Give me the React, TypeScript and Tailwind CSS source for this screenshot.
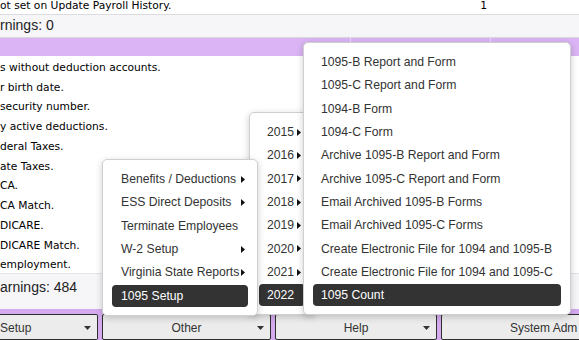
import React from "react";

const rows = [
  "s without deduction accounts.",
  "r birth date.",
  "security number.",
  "y active deductions.",
  "deral Taxes.",
  "ate Taxes.",
  "CA.",
  "CA Match.",
  "DICARE.",
  "DICARE Match.",
  "employment.",
];

type Item = { label: string; sub?: boolean; active?: boolean };

const otherItems: Item[] = [
  { label: "Benefits / Deductions", sub: true },
  { label: "ESS Direct Deposits", sub: true },
  { label: "Terminate Employees" },
  { label: "W-2 Setup", sub: true },
  { label: "Virginia State Reports", sub: true },
  { label: "1095 Setup", active: true },
];

const yearItems: Item[] = [
  { label: "2015", sub: true },
  { label: "2016", sub: true },
  { label: "2017", sub: true },
  { label: "2018", sub: true },
  { label: "2019", sub: true },
  { label: "2020", sub: true },
  { label: "2021", sub: true },
  { label: "2022", active: true },
];

const formItems: Item[] = [
  { label: "1095-B Report and Form" },
  { label: "1095-C Report and Form" },
  { label: "1094-B Form" },
  { label: "1094-C Form" },
  { label: "Archive 1095-B Report and Form" },
  { label: "Archive 1095-C Report and Form" },
  { label: "Email Archived 1095-B Forms" },
  { label: "Email Archived 1095-C Forms" },
  { label: "Create Electronic File for 1094 and 1095-B" },
  { label: "Create Electronic File for 1094 and 1095-C" },
  { label: "1095 Count", active: true },
];

function SubArrow() {
  return (
    <svg width="4" height="7" viewBox="0 0 4 7" className="shrink-0">
      <polygon points="0,0 4,3.5 0,7" fill="#111" />
    </svg>
  );
}

function DownCaret() {
  return (
    <svg width="7" height="4" viewBox="0 0 7 4" className="mr-[6px] shrink-0">
      <polygon points="0,0 7,0 3.5,4" fill="#333" />
    </svg>
  );
}

// one dropdown panel; rows are 22px with a small gap so they land every ~23.4px
function Menu({ items, className, itemPad }: { items: Item[]; className: string; itemPad: string }) {
  return (
    <div
      className={`absolute flex flex-col gap-[1.35px] rounded-[5px] border border-[#cfcfcf] bg-white py-[8px] shadow-[0_2px_7px_rgba(0,0,0,0.2)] ${className}`}
    >
      {items.map((it) => (
        <div
          key={it.label}
          className={`flex h-[22px] items-center justify-between whitespace-nowrap rounded-[4px] ${itemPad} ${
            it.active ? "bg-[#333333] text-white" : "text-[#333333]"
          }`}
        >
          <span>{it.label}</span>
          {it.sub && <SubArrow />}
        </div>
      ))}
    </div>
  );
}

export default function App() {
  return (
    <div className="relative h-[340px] w-[579px] overflow-hidden bg-white font-['Liberation_Sans',Arial,sans-serif] text-black">
      <div className="flex h-full flex-col">
        <div className="grid h-[15px] grid-cols-[350px_140px_1fr] border-b border-[#dcdbe0] font-['DejaVu_Sans',Verdana,sans-serif] text-[10.7px] leading-[11px]">
          <div className="whitespace-nowrap">ot set on Update Payroll History.</div>
          <div className="pr-[3px] text-right">1</div>
          <div />
        </div>
        <div className="flex h-[24px] items-center border-b border-[#d8d7dc] bg-[#f6f5f8] text-[14px] text-[#222]">
          rnings: 0
        </div>
        <div className="grid h-[18px] grid-cols-[350px_140px_1fr] bg-[#dab4f4]">
          <div />
          <div className="border-l border-[#ecdcf8]" />
          <div className="border-l border-[#ecdcf8]" />
        </div>
        <div className="flex flex-col font-['DejaVu_Sans',Verdana,sans-serif] text-[10.7px]">
          {rows.map((r) => (
            <div key={r} className="flex h-[19.75px] items-center whitespace-nowrap pt-[5px]">
              {r}
            </div>
          ))}
        </div>
        <div className="h-[37px] border-t border-[#e4e3e8] bg-[#f6f5f8] pt-[3px] text-[14px] leading-[20px] text-[#222]">
          arnings: 484
        </div>
        <div className="flex flex-1 gap-[4px] bg-[#d4aaee] pt-[5px] text-[12px] text-[#333]">
          <div className="flex h-[26px] w-[98px] shrink-0 items-center justify-between rounded-r-[2px] border border-l-0 border-[#2e2e2e] bg-[#ececec] pt-[2px]">
            <span>Setup</span>
            <DownCaret />
          </div>
          <div className="flex h-[26px] w-[169px] shrink-0 items-center rounded-[2px] border border-[#2e2e2e] bg-[#ececec] pt-[2px]">
            <span className="w-[13px]" />
            <span className="flex-1 text-center">Other</span>
            <DownCaret />
          </div>
          <div className="flex h-[26px] w-[162px] shrink-0 items-center rounded-[2px] border border-[#2e2e2e] bg-[#ececec] pt-[2px]">
            <span className="w-[13px]" />
            <span className="flex-1 text-center">Help</span>
            <DownCaret />
          </div>
          <div className="flex h-[26px] w-[170px] shrink-0 items-center whitespace-nowrap rounded-[2px] border border-[#2e2e2e] bg-[#ececec] pl-[68px] pt-[2px]">
            System Adm
          </div>
        </div>
      </div>

      <div className="text-[12.2px]">
        <Menu items={yearItems} className="left-[249px] top-[112px] w-[66px] px-[9px]" itemPad="pl-[8px] pr-[4px]" />
        <Menu items={otherItems} className="left-[102px] top-[159px] w-[156px] pl-[9px] pr-[9px]" itemPad="pl-[9px] pr-[3px]" />
        <Menu items={formItems} className="left-[303px] top-[42px] w-[268px] px-[9px]" itemPad="pl-[8px] pr-[4px]" />
      </div>
    </div>
  );
}
